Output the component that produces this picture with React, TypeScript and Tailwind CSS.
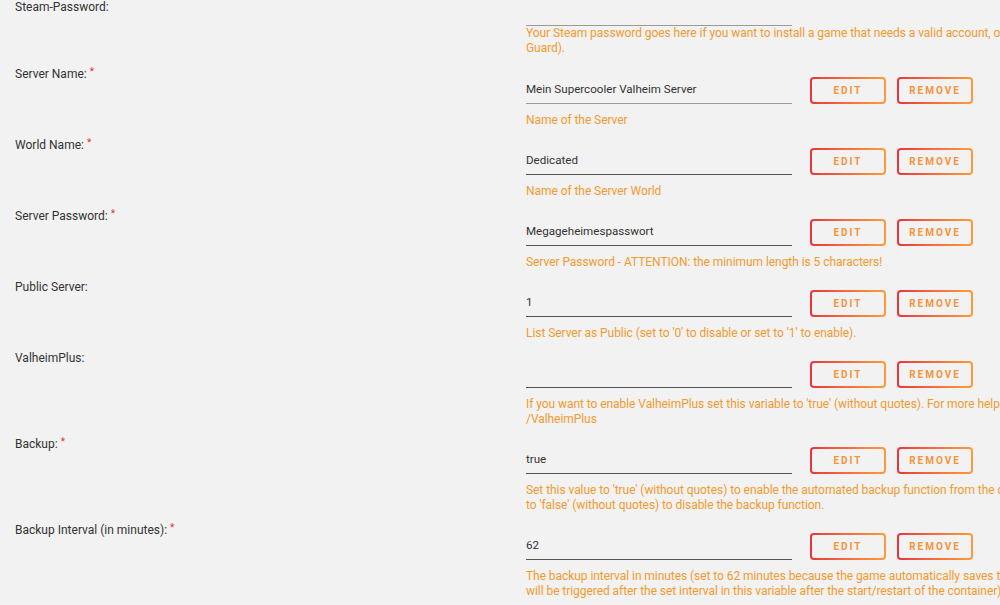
import React from "react";

interface Variable {
  label: string;
  required?: boolean;
  value: string;
  help: string[];
  editable?: boolean;
  muted?: boolean;
}

const variables: Variable[] = [
  {
    label: "Steam-Password:",
    value: "",
    editable: false,
    muted: true,
    help: [
      "Your Steam password goes here if you want to install a game that needs a valid account, otherwise leave it empty (make sure to disable Steam",
      "Guard).",
    ],
  },
  {
    label: "Server Name:",
    required: true,
    value: "Mein Supercooler Valheim Server",
    muted: true,
    help: ["Name of the Server"],
  },
  {
    label: "World Name:",
    required: true,
    value: "Dedicated",
    help: ["Name of the Server World"],
  },
  {
    label: "Server Password:",
    required: true,
    value: "Megageheimespasswort",
    help: ["Server Password - ATTENTION: the minimum length is 5 characters!"],
  },
  {
    label: "Public Server:",
    value: "1",
    help: ["List Server as Public (set to '0' to disable or set to '1' to enable)."],
  },
  {
    label: "ValheimPlus:",
    value: "",
    help: [
      "If you want to enable ValheimPlus set this variable to 'true' (without quotes). For more help go to: https://github.com/valheimPlus",
      "/ValheimPlus",
    ],
  },
  {
    label: "Backup:",
    required: true,
    value: "true",
    help: [
      "Set this value to 'true' (without quotes) to enable the automated backup function from the container or set this value",
      "to 'false' (without quotes) to disable the backup function.",
    ],
  },
  {
    label: "Backup Interval (in minutes):",
    required: true,
    value: "62",
    help: [
      "The backup interval in minutes (set to 62 minutes because the game automatically saves the world every 60 minutes). The backup",
      "will be triggered after the set interval in this variable after the start/restart of the container).",
    ],
  },
];

function GradientButton({ children }: { children: React.ReactNode }) {
  return (
    <div className="rounded-[4px] bg-gradient-to-r from-[#e8323c] to-[#ff9a3a] p-[2px]">
      <button className="flex h-[23px] w-[72px] items-center justify-center rounded-[2px] bg-[#f2f2f2] text-[10px] font-bold tracking-[2px] text-[#f7923a]">
        {children}
      </button>
    </div>
  );
}

function VariableRow({ v }: { v: Variable }) {
  const hasButtons = v.editable !== false;
  return (
    <div className={hasButtons ? "flex pb-[10px]" : "flex pb-[11px]"}>
      <div className="w-[526px] shrink-0 pl-[15px] text-[12px] leading-[14px] text-[#333]">
        {v.label}
        {v.required && (
          <span className="relative -top-[3px] ml-[3px] text-[10px] text-[#e5322f]">*</span>
        )}
      </div>
      <div className="flex flex-col">
        <div className={hasButtons ? "flex items-center pt-[10px] pb-[9px]" : "flex items-center"}>
          <div
            className={
              "flex h-[26px] w-[266px] items-center border-b text-[11.6px] text-[#333] " +
              (v.muted ? "border-[#9a9a9a]" : "border-[#555]")
            }
          >
            {v.value}
          </div>
          {hasButtons && (
            <div className="ml-[18px] flex gap-[11px]">
              <GradientButton>EDIT</GradientButton>
              <GradientButton>REMOVE</GradientButton>
            </div>
          )}
        </div>
        <div className="text-[12px] leading-[15px] tracking-[-0.06px] text-[#f29a2e]">
          {v.help.map((line, i) => (
            <div key={i} className="whitespace-nowrap">
              {line}
            </div>
          ))}
        </div>
      </div>
    </div>
  );
}

export default function App() {
  return (
    <div
      className="h-[605px] w-[1000px] overflow-hidden bg-[#f2f2f2]"
      style={{ fontFamily: "Roboto, 'Noto Sans', sans-serif" }}
    >
      {variables.map((v) => (
        <VariableRow key={v.label} v={v} />
      ))}
    </div>
  );
}
